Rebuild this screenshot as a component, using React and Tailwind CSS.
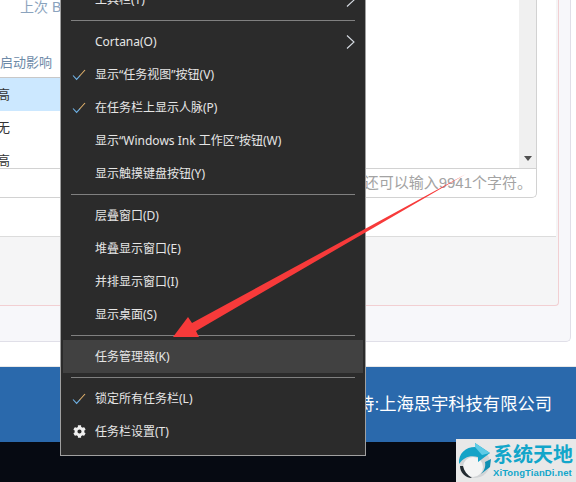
import React from 'react';
import { FaCog } from 'react-icons/fa';

const ui = { fontFamily: '"Noto Sans", "Noto Sans CJK SC", sans-serif' };
const web = { fontFamily: '"Liberation Sans", "Noto Sans CJK SC", sans-serif' };

const Check = () => (
  <svg width="14" height="12" viewBox="0 0 14 12" fill="none" strokeWidth="1.1">
    <path d="M1 6.5 L4.6 10.4 L8 6.6" stroke="#6fb2e6" />
    <path d="M7.6 7 L13 1" stroke="#e2b26c" />
  </svg>
);

const Chevron = () => (
  <svg width="9" height="14" viewBox="0 0 9 14" fill="none" stroke="#d6dbe2" strokeWidth="1.1">
    <path d="M1 0.5 L8 7 L1 13.5" />
  </svg>
);

const Sep = () => (
  <div className="h-[9px] pt-[4px] mx-[10px]">
    <div className="h-px bg-[#808080]" />
  </div>
);

const Item = ({ icon, more, active, children }) => (
  <div className={`h-[33px] mx-[2px] flex items-center text-[12px] text-[#e6e6e6] ${active ? 'bg-[#414141]' : ''}`}>
    <div className="w-[32px] flex justify-center shrink-0">{icon}</div>
    <div className="flex-1 whitespace-nowrap">{children}</div>
    {more && <div className="mr-[8px] flex"><Chevron /></div>}
  </div>
);

const TaskbarMenu = () => (
  <div style={ui} className="absolute left-[60px] top-[-18px] w-[306px] bg-[#2b2b2b] border border-[#a0a0a0] pb-[7px]">
    <Item more>工具栏(T)</Item>
    <Sep />
    <Item more>Cortana(O)</Item>
    <Item icon={<Check />}>显示“任务视图”按钮(V)</Item>
    <Item icon={<Check />}>在任务栏上显示人脉(P)</Item>
    <Item>显示“Windows Ink 工作区”按钮(W)</Item>
    <Item>显示触摸键盘按钮(Y)</Item>
    <Sep />
    <Item>层叠窗口(D)</Item>
    <Item>堆叠显示窗口(E)</Item>
    <Item>并排显示窗口(I)</Item>
    <Item>显示桌面(S)</Item>
    <Sep />
    <Item active>任务管理器(K)</Item>
    <Sep />
    <Item icon={<Check />}>锁定所有任务栏(L)</Item>
    <Item icon={<FaCog size={13} className="text-[#f0f0f0]" />}>任务栏设置(T)</Item>
  </div>
);

const Arrow = () => (
  <svg className="absolute left-0 top-0 pointer-events-none" width="576" height="482" viewBox="0 0 576 482">
    <polygon points="466,174 192,323 188,317 173,337 199,337 196,331" fill="#f73a3a" />
  </svg>
);

const Watermark = () => (
  <div className="absolute right-0 bottom-0 w-[120px] h-[43px] bg-[#e8e8e8] flex items-center">
    <svg className="ml-[1px] shrink-0" width="36" height="38" viewBox="0 0 36 38">
      <circle cx="18" cy="21" r="15" fill="#d2d4d6" />
      <circle cx="16" cy="25" r="10" fill="#f4f4f4" />
      <path d="M2 22 C1 11 9 5 18 5 L18 1 L33 11 L21 20 L21 15 C13 13 7 15 2 22 Z" fill="#14a3c7" />
      <path d="M18 5 L18 1 L33 11 L25 13 Z" fill="#5fcbe6" />
      <path d="M3 24 C3 30 8 36 15 36 C10 33 7 29 6 24 Z" fill="#222a30" />
      <path d="M24 32 L33 25 L34 17 L28 20 C29 25 27 29 24 32 Z" fill="#0f8fb2" />
    </svg>
    <div className="flex flex-col ml-0 mt-[1px] w-[80px]">
      <div style={ui} className="text-[20px] leading-[24px] font-bold text-[#12a6ca] whitespace-nowrap">系统天地</div>
      <div style={web} className="text-[9.5px] leading-[12px] font-bold text-[#12a6ca] whitespace-nowrap tracking-[0.1px]">XiTongTianDi.net</div>
    </div>
  </div>
);

const rows = [
  { v: '高', selected: true },
  { v: '无' },
  { v: '高' },
];

export default function App() {
  return (
    <div style={web} className="relative w-[576px] h-[482px] overflow-hidden bg-white flex flex-col">
      {/* page behind the menu */}
      <div className="h-[367px] shrink-0 bg-white border-b border-[#e8e8e8]">
        <div className="h-[342px] mr-[5px] bg-[#f7f7fa] border-r border-b border-[#e0dfe8] rounded-br-[5px]">
          <div className="h-[306px] mr-[11px] bg-[#f5f5f6] border-r border-b border-[#f2cfd2] rounded-br-[4px] overflow-hidden">
            <div className="h-[237px] bg-white border-b border-[#dcdcdc] pr-[19px] mr-[2px]">
              <div className="h-[198px] border-r border-b border-[#d2d2d2] rounded-br-[5px] flex flex-col">
                <div className="h-[168px] flex border-b border-[#d2d2d2] box-content">
                  <div className="flex-1 flex flex-col overflow-hidden">
                    <div className="w-[300px] flex flex-col">
                      <div className="h-[14px] shrink-0 pl-[20px] text-[14px] leading-[14px] text-[#8ba3bd] whitespace-nowrap">上次 BIOS 时间</div>
                      <div className="h-[64px] shrink-0 flex items-end pb-[6px] border-b border-[#c8c8c8] text-[13px] leading-[16px] text-[#6d8aa8] whitespace-nowrap">启动影响</div>
                      {rows.map((r, i) => (
                        <div key={i} className={`h-[33px] shrink-0 flex items-center text-[13px] text-[#333333] ${r.selected ? 'bg-[#cce8ff]' : ''}`}>
                          <span className="-ml-[3px]">{r.v}</span>
                        </div>
                      ))}
                    </div>
                  </div>
                  <div className="w-[17px] bg-[#f0f0f0] flex flex-col justify-end items-center pb-[7px]">
                    <div className="w-0 h-0 border-x-[4px] border-x-transparent border-t-[5px] border-t-[#505050]" />
                  </div>
                </div>
                <div className="flex-1 flex items-center justify-end pr-[4px] text-[15px] text-[#a3a3a3] whitespace-nowrap">接下来还可以输入9941个字符。</div>
              </div>
            </div>
          </div>
        </div>
      </div>

      <div className="h-[75px] shrink-0 bg-[#2a69ac] flex items-center justify-end pr-[24px] text-[17.3px] text-white whitespace-nowrap">
        技术支持:上海思宇科技有限公司
      </div>
      <div className="flex-1 bg-[#060a12]" />

      <TaskbarMenu />
      <Arrow />
      <Watermark />
    </div>
  );
}
